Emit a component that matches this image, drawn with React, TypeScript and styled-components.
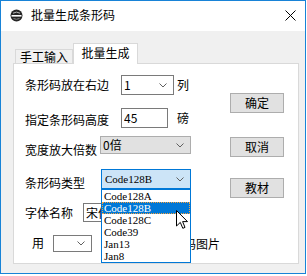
import React from 'react';
import styled, { createGlobalStyle } from 'styled-components';

const GlobalStyle = createGlobalStyle`
  html, body { margin: 0; padding: 0; background: #fff; }
  body {
    font-family: "Noto Sans CJK SC", "Noto Sans", sans-serif;
    font-size: 12px;
    line-height: 16px;
    color: #000;
  }
`;

const Window = styled.div`
  position: relative;
  box-sizing: border-box;
  width: 306px;
  height: 274px;
  border: 1px solid #1883d7;
  display: flex;
  flex-direction: column;
`;

const TitleBar = styled.div`
  height: 30px;
  background: #fff;
  display: flex;
  align-items: center;
  padding: 0 9px 2px 9px;
  box-sizing: border-box;
`;

const Title = styled.span`
  flex: 1;
  margin-left: 8px;
`;

const Client = styled.div`
  flex: 1;
  background: #f0f0f0;
  padding: 12px 0 9px 12px;
  display: flex;
  flex-direction: column;
`;

const TabStrip = styled.div`
  height: 20px;
  display: flex;
  align-items: flex-end;
  padding-left: 2px;
`;

const Tab = styled.div<{ $active?: boolean; $w: number }>`
  box-sizing: border-box;
  width: ${p => p.$w}px;
  height: ${p => (p.$active ? 21 : 14)}px;
  margin-bottom: ${p => (p.$active ? -1 : 0)}px;
  padding-bottom: ${p => (p.$active ? 2 : 0)}px;
  position: relative;
  z-index: ${p => (p.$active ? 2 : 0)};
  background: ${p => (p.$active ? '#fff' : '#f0f0f0')};
  border: 1px solid #d9d9d9;
  border-bottom: none;
  display: flex;
  align-items: center;
  justify-content: center;
`;

const Panel = styled.div`
  position: relative;
  box-sizing: border-box;
  width: 286px;
  height: 201px;
  background: #fff;
  border: 1px solid #d9d9d9;
  display: flex;
`;

const LeftCol = styled.div`
  flex: 1;
  padding: 11px 0 0 11px;
  display: flex;
  flex-direction: column;
`;

const RightCol = styled.div`
  width: 54px;
  padding: 29px 14px 0 0;
  display: flex;
  flex-direction: column;
`;

const Row = styled.div<{ $mt: number; $h: number }>`
  margin-top: ${p => p.$mt}px;
  height: ${p => p.$h}px;
  display: flex;
  align-items: center;
`;

const Label = styled.span<{ $w: number; $dy?: number; $pl?: number }>`
  width: ${p => p.$w}px;
  padding-left: ${p => p.$pl || 0}px;
  box-sizing: border-box;
  flex-shrink: 0;
  white-space: nowrap;
  margin-top: ${p => (p.$dy || 0) * 2}px;
`;

const Unit = styled.span<{ $ml: number }>`
  margin-left: ${p => p.$ml}px;
`;

const Trailing = styled.span<{ $ml: number }>`
  margin-left: ${p => p.$ml}px;
  white-space: nowrap;
`;

type Variant = 'plain' | 'disabled' | 'open';

const Field = styled.div<{ $w: number; $variant?: Variant; $mono?: boolean }>`
  position: relative;
  box-sizing: border-box;
  width: ${p => p.$w}px;
  height: 100%;
  flex-shrink: 0;
  display: flex;
  align-items: center;
  padding: 0 6px 0 ${p => (p.$mono ? 3 : 2)}px;
  border: 1px solid
    ${p => (p.$variant === 'open' ? '#0078d7' : p.$variant === 'disabled' ? '#adadad' : '#7a7a7a')};
  background: ${p => (p.$variant === 'open' ? '#cce4f7' : p.$variant === 'disabled' ? '#e1e1e1' : '#fff')};
  font-family: ${p => (p.$mono ? '"Liberation Serif", serif' : 'inherit')};
  font-size: ${p => (p.$mono ? 11 : 12)}px;
`;

const Value = styled.span`
  flex: 1;
  white-space: nowrap;
  overflow: hidden;
`;

const DropList = styled.ul`
  position: absolute;
  z-index: 10;
  left: -1px;
  top: calc(100% + 1px);
  width: 90px;
  box-sizing: border-box;
  margin: 0;
  padding: 0;
  list-style: none;
  background: #fff;
  border: 1px solid #0078d7;
`;

const DropItem = styled.li<{ $selected?: boolean }>`
  height: 12px;
  line-height: 12px;
  padding-left: 2px;
  box-sizing: border-box;
  color: ${p => (p.$selected ? '#fff' : '#000')};
  background: ${p => (p.$selected ? '#0078d7' : 'transparent')};
  outline: ${p => (p.$selected ? '1px dotted #f4a340' : 'none')};
  outline-offset: -1px;
`;

const Button = styled.div<{ $mt: number }>`
  margin-top: ${p => p.$mt}px;
  box-sizing: border-box;
  width: 54px;
  height: 20px;
  background: #e1e1e1;
  border: 1px solid #adadad;
  display: flex;
  align-items: center;
  justify-content: center;
`;

const Cursor = styled.svg`
  position: absolute;
  left: 175px;
  top: 209px;
  z-index: 20;
`;

const Chevron = () => (
  <svg width="8" height="5" viewBox="0 0 8 5">
    <path d="M0.5 0.5 L4 4 L7.5 0.5" fill="none" stroke="#606060" strokeWidth="1" />
  </svg>
);

const AppIcon = () => (
  <svg width="13" height="13" viewBox="0 0 13 13">
    <circle cx="6.5" cy="6.5" r="6" fill="#262626" />
    <path d="M3 4.2 Q6.5 2 10 4.2" fill="none" stroke="#bbb" strokeWidth="1" />
    <rect x="1.5" y="6" width="10" height="1.6" fill="#fff" />
    <path d="M3.5 9.5 Q6.5 11 9.5 9.5" fill="none" stroke="#888" strokeWidth="1" />
  </svg>
);

const CloseIcon = () => (
  <svg width="11" height="11" viewBox="0 0 11 11">
    <path d="M0.5 0.5 L10.5 10.5 M10.5 0.5 L0.5 10.5" stroke="#000" strokeWidth="1" />
  </svg>
);

const codes = ['Code128A', 'Code128B', 'Code128C', 'Code39', 'Jan13', 'Jan8'];

export default function App() {
  return (
    <>
      <GlobalStyle />
      <Window>
        <TitleBar>
          <AppIcon />
          <Title>批量生成条形码</Title>
          <CloseIcon />
        </TitleBar>
        <Client>
          <TabStrip>
            <Tab $w={58}>手工输入</Tab>
            <Tab $w={65} $active>
              批量生成
            </Tab>
          </TabStrip>
          <Panel>
            <LeftCol>
              <Row $mt={0} $h={20}>
                <Label $w={96}>条形码放在右边</Label>
                <Field $w={53}>
                  <Value>1</Value>
                  <Chevron />
                </Field>
                <Unit $ml={3}>列</Unit>
              </Row>
              <Row $mt={13} $h={20}>
                <Label $w={96} $dy={2}>
                  指定条形码高度
                </Label>
                <Field $w={47}>
                  <Value>45</Value>
                </Field>
                <Unit $ml={9}>磅</Unit>
              </Row>
              <Row $mt={8} $h={18}>
                <Label $w={75} $dy={5}>
                  宽度放大倍数
                </Label>
                <Field $w={91} $variant="disabled">
                  <Value>0倍</Value>
                  <Chevron />
                </Field>
              </Row>
              <Row $mt={15} $h={20}>
                <Label $w={76} $dy={4}>
                  条形码类型
                </Label>
                <Field $w={90} $variant="open" $mono>
                  <Value>Code128B</Value>
                  <Chevron />
                  <DropList>
                    {codes.map(c => (
                      <DropItem key={c} $selected={c === 'Code128B'}>
                        {c}
                      </DropItem>
                    ))}
                  </DropList>
                </Field>
              </Row>
              <Row $mt={14} $h={19}>
                <Label $w={58}>字体名称</Label>
                <Field $w={100}>
                  <Value>宋体</Value>
                </Field>
              </Row>
              <Row $mt={13} $h={17}>
                <Label $w={28} $pl={7} $dy={-1}>
                  用
                </Label>
                <Field $w={39}>
                  <Value />
                  <Chevron />
                </Field>
                <Trailing $ml={44}>生成条形码图片</Trailing>
              </Row>
            </LeftCol>
            <RightCol>
              <Button $mt={0}>确定</Button>
              <Button $mt={24}>取消</Button>
              <Button $mt={21}>教材</Button>
            </RightCol>
          </Panel>
        </Client>
        <Cursor width="13" height="20" viewBox="0 0 13 20">
          <path
            d="M0.5 0.5 L0.5 16 L4.3 12.4 L6.8 18.3 L9 17.4 L6.6 11.6 L11.5 11.6 Z"
            fill="#fff"
            stroke="#000"
            strokeWidth="1"
            strokeLinejoin="miter"
          />
        </Cursor>
      </Window>
    </>
  );
}
